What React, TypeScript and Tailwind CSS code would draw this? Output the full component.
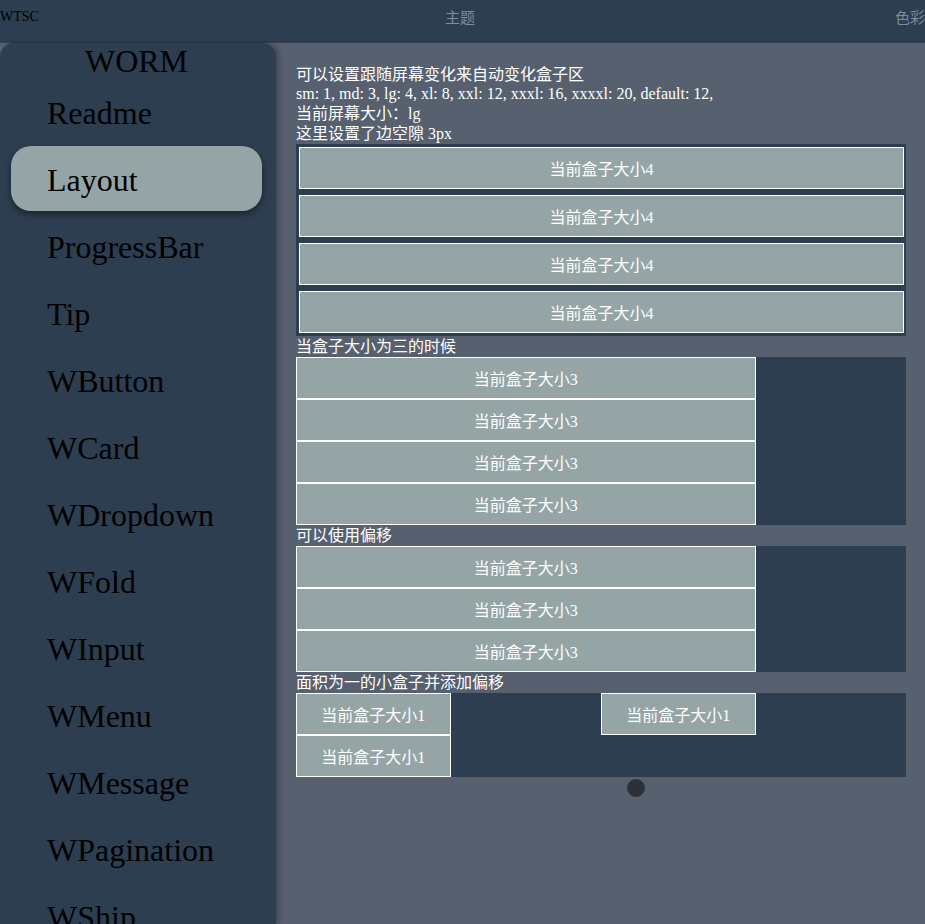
import React from "react";

const FONT = '"Liberation Serif", "Noto Sans CJK SC", serif';

const navItems = [
  "Readme",
  "Layout",
  "ProgressBar",
  "Tip",
  "WButton",
  "WCard",
  "WDropdown",
  "WFold",
  "WInput",
  "WMenu",
  "WMessage",
  "WPagination",
  "WShip",
];

function Box({ label, className = "" }: { label: string; className?: string }) {
  return (
    <div
      className={
        "h-[42px] shrink-0 border border-white bg-[#95a5a6] flex items-center justify-center pt-[3px] text-[16px] text-white " +
        className
      }
    >
      {label}
    </div>
  );
}

export default function App() {
  return (
    <div
      className="w-[925px] h-[924px] overflow-hidden bg-[#56606e] flex flex-col"
      style={{ fontFamily: FONT }}
    >
      <header className="h-[43px] shrink-0 bg-[#2c3e50] grid grid-cols-[445px_450px_30px] items-center pb-[10px]">
        <div className="text-[14px] text-black leading-none">WTSC</div>
        <div
          className="text-[15px] text-[#7f8c9b] leading-none"
          style={{ fontFamily: '"Noto Sans CJK SC", sans-serif' }}
        >
          主题
        </div>
        <div
          className="text-[15px] text-[#7f8c9b] leading-none whitespace-nowrap"
          style={{ fontFamily: '"Noto Sans CJK SC", sans-serif' }}
        >
          色彩
        </div>
      </header>
      <div className="flex flex-1 min-h-0">
        <aside className="w-[276px] shrink-0 bg-[#2d3e50] rounded-t-[14px] shadow-[3px_0_5px_rgba(0,0,0,0.25)] flex flex-col overflow-hidden z-10">
          <div className="h-[37px] text-[32px] leading-[36px] text-black text-center pr-[3px]">WORM</div>
          <nav className="flex flex-col">
            {navItems.map((item) => (
              <div
                key={item}
                className={
                  item === "Layout"
                    ? "ml-[11px] mr-[14px] h-[65px] mb-[2px] shrink-0 rounded-[20px] bg-[#95a5a6] shadow-[0_3px_6px_rgba(0,0,0,0.45)] flex items-center pl-[36px] pt-[2px] text-[32px] text-black"
                    : "ml-[11px] mr-[14px] h-[65px] mb-[2px] shrink-0 rounded-[20px] flex items-center pl-[36px] pt-[2px] text-[32px] text-black"
                }
              >
                {item}
              </div>
            ))}
          </nav>
        </aside>
        <main className="flex-1 pl-[20px] pr-[19px] pt-[21px] text-white text-[16px]">
          <div className="leading-[20px] pt-[1px] h-[20px]">可以设置跟随屏幕变化来自动变化盒子区</div>
          <div className="leading-[20px]">sm: 1, md: 3, lg: 4, xl: 8, xxl: 12, xxxl: 16, xxxxl: 20, default: 12,</div>
          <div className="leading-[20px]">当前屏幕大小：lg</div>
          <div className="leading-[20px]">这里设置了边空隙 3px</div>
          <div className="w-[610px] bg-[#2c3e50] flex flex-col">
            {[0, 1, 2, 3].map((i) => (
              <Box key={i} label="当前盒子大小4" className="m-[3px] mr-[2px]" />
            ))}
          </div>
          <div className="leading-[21px]">当盒子大小为三的时候</div>
          <div className="w-[610px] bg-[#2c3e50] flex flex-col">
            {[0, 1, 2, 3].map((i) => (
              <Box key={i} label="当前盒子大小3" className="w-[459.5px]" />
            ))}
          </div>
          <div className="leading-[21px]">可以使用偏移</div>
          <div className="w-[610px] bg-[#2c3e50] flex flex-col">
            {[0, 1, 2].map((i) => (
              <Box key={i} label="当前盒子大小3" className="w-[459.5px]" />
            ))}
          </div>
          <div className="leading-[21px]">面积为一的小盒子并添加偏移</div>
          <div className="w-[610px] bg-[#2c3e50] flex flex-col">
            <div className="flex">
              <Box label="当前盒子大小1" className="w-[154.5px]" />
              <Box label="当前盒子大小1" className="w-[154.5px] ml-[150.5px]" />
            </div>
            <div className="flex">
              <Box label="当前盒子大小1" className="w-[154.5px]" />
            </div>
          </div>
          <div className="mt-[2px] ml-[331px] w-[18px] h-[18px] rounded-full bg-[#2d3039]" />
        </main>
      </div>
    </div>
  );
}
